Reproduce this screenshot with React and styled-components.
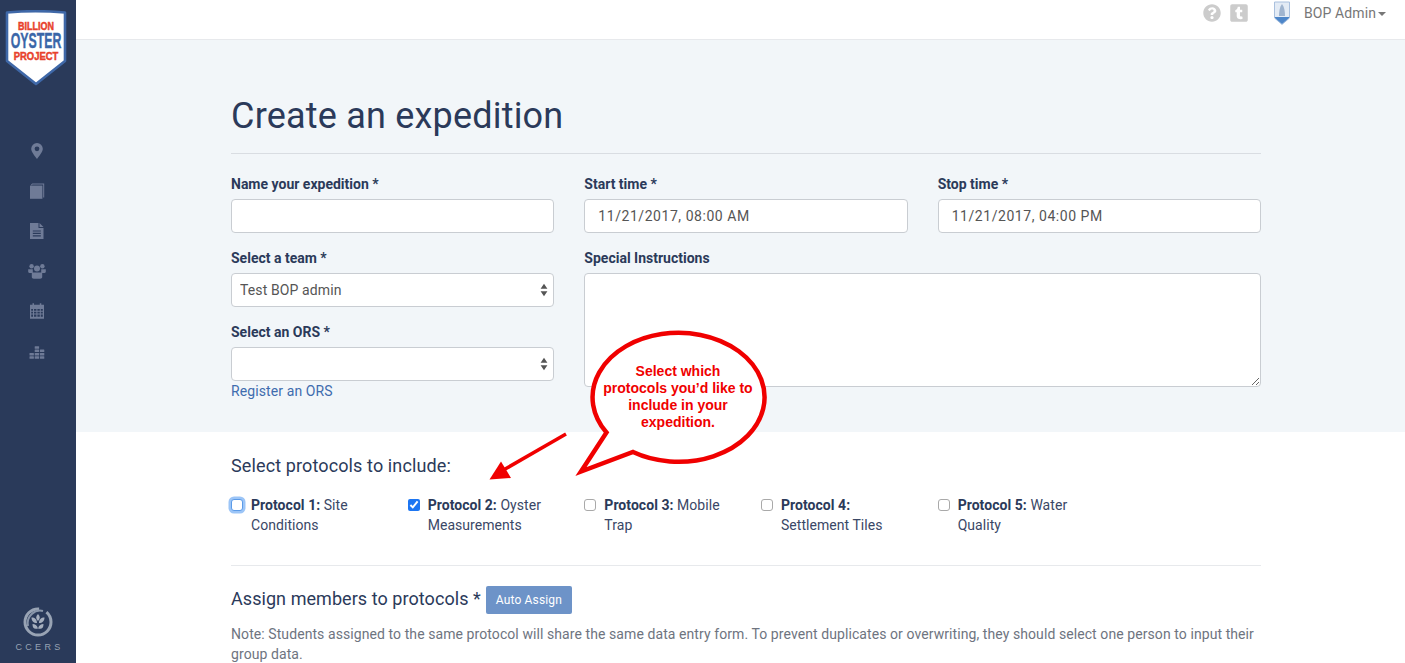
import React from "react";
import styled, { createGlobalStyle } from "styled-components";
import { FaQuestionCircle, FaTumblrSquare } from "react-icons/fa";

const Global = createGlobalStyle`
  html, body { margin: 0; padding: 0; height: 100%; overflow: hidden; background: #fff; }
  body { font-family: Roboto, "Liberation Sans", sans-serif; font-size: 14px; line-height: 20px; color: #2b3a5a; }
  * { box-sizing: border-box; }
`;

const Shell = styled.div`display: flex; height: 100vh; overflow: hidden; position: relative;`;
const Sidebar = styled.aside`
  width: 76px; flex: none; background: #2a3a5a; display: flex; flex-direction: column; align-items: center;
  padding-top: 10px;
`;
const LogoBox = styled.div`height: 121px; width: 100%; padding-left: 5px;`;
const Nav = styled.nav`display: flex; flex-direction: column; width: 100%;`;
const NavItem = styled.a`height: 40px; display: flex; align-items: center; justify-content: center; padding-right: 2px; color: #6f7b97;`;
const FooterLogo = styled.div`margin-top: auto; padding-bottom: 10px; display: flex; flex-direction: column; align-items: center; gap: 3px; color: #98a3b4;`;
const FooterText = styled.span`font-size: 9px; line-height: 12px; letter-spacing: 3.3px; padding-left: 3px; font-family: "Liberation Sans", sans-serif;`;

const Main = styled.main`flex: 1; min-width: 0; display: flex; flex-direction: column;`;
const TopBar = styled.header`
  height: 40px; flex: none; border-bottom: 1px solid #e7e9ec; background: #fff; display: flex; align-items: center;
  justify-content: flex-end; padding-right: 19px; padding-bottom: 13px; color: #cccccc;
`;
const TopIcon = styled.span`display: flex; margin-left: ${p => p.$gap}px; font-size: ${p => p.$size}px;`;
const UserName = styled.span`margin-left: 14px; color: #777; font-size: 14px; letter-spacing: .1px;`;
const Caret = styled.span`display: inline-block; margin-left: 2px; vertical-align: 2px; border-top: 4px solid #777; border-left: 4px solid transparent; border-right: 4px solid transparent;`;

const Panel = styled.section`flex: none; background: #f2f6f9; height: 392px; padding-left: 155px;`;
const Wrap = styled.div`width: 1030px;`;
const White = styled.section`flex: none; padding-left: 155px;`;
const Title = styled.h1`
  margin: 0; padding: 56px 0 17px; font-size: 36px; line-height: 40px; font-weight: 400; letter-spacing: .2px;
  border-bottom: 1px solid #d9dde2; height: 114px; color: #2b3a5a;
`;
const FormGrid = styled.div`display: grid; grid-template-columns: repeat(3, 1fr); column-gap: 30px; padding-top: 20px;`;
const Field = styled.div`display: flex; flex-direction: column; margin-bottom: 15px; grid-column: span ${p => p.$span || 1};`;
const Stack = styled.div`display: flex; flex-direction: column;`;
const Label = styled.label`font-weight: 700; font-size: 14px; line-height: 20px; margin-bottom: 5px; color: #2b3a5a;`;
const TextInput = styled.input`
  height: 34px; width: 100%; border: 1px solid #c9cdd2; border-radius: 4px; background: #fff; padding: 0 13px;
  font: 400 14px Roboto, sans-serif; letter-spacing: .55px; color: #555; outline: none;
`;
const SelectWrap = styled.div`position: relative; height: 34px;`;
const Select = styled.select`
  appearance: none; height: 34px; width: 100%; border: 1px solid #c9cdd2; border-radius: 4px; background: #fff; padding: 0 8px;
  font: 400 14px Roboto, sans-serif; letter-spacing: .12px; color: #555; outline: none;
`;
const Arrows = styled.svg`position: absolute; right: 3px; top: 10px; pointer-events: none;`;
const TextArea = styled.textarea`
  height: 114px; width: 100%; border: 1px solid #c9cdd2; border-radius: 4px; background: #fff; outline: none; display: block;
`;
const Link = styled.a`color: #3f6cae; font-size: 14px; line-height: 20px; letter-spacing: .1px;`;

const SectionHead = styled.h2`margin: 0; padding-top: 24px; font-size: 18px; line-height: 20px; font-weight: 400; letter-spacing: .12px; color: #2b3a5a;`;
const Protocols = styled.div`display: flex; width: 1060px; margin-top: 19px; padding-bottom: 30px; `;
const Protocol = styled.label`width: 176.66px; padding-right: 30px; display: flex; gap: 8px; line-height: 20px; letter-spacing: .05px; color: #3a4766;`;
const Check = styled.input`
  width: 12px; height: 12px; margin: 4px 0 0; flex: none; accent-color: #1d76f2; appearance: none;
  border: 1px solid #a9a9a9; border-radius: 3px; background: #fff;
  &:checked { appearance: auto; }
  ${p => p.$focus && "outline: none; border-color: #5b9be8; box-shadow: 0 0 0 2.5px #9cc5f7;"}
`;
const Strong = styled.b`font-weight: 700; color: #2b3a5a;`;
const Rule = styled.hr`margin: 0; border: 0; border-top: 1px solid #e7e9ec;`;
const AssignRow = styled.div`display: flex; align-items: flex-start; gap: 5px; margin-top: 20px;`;
const AssignTitle = styled.span`font-size: 18px; line-height: 26px; letter-spacing: .06px;`;
const Button = styled.button`
  height: 28px; width: 86px; border: 0; border-radius: 2px; background: #6d93c8; color: #fff;
  font: 400 12px Roboto, sans-serif; letter-spacing: .15px;
`;
const Note = styled.p`margin: 10px 0 0; color: #6e7480; font-size: 14px; line-height: 20px; letter-spacing: .08px;`;

const Callout = styled.div`position: absolute; left: 480px; top: 320px; width: 300px; height: 170px; pointer-events: none;`;
const CalloutText = styled.div`
  position: absolute; left: 118px; top: 43px; width: 160px; text-align: center;
  font: 700 14px/17px "Liberation Sans", Arial, sans-serif; color: #f00000;
`;

const Logo = () => (
  <svg width="62" height="78" viewBox="0 0 62 78">
    <path d="M2 2.5 C18 1 43 1 60 2.5 V51 L31 74 L2 51 Z" fill="#fff" stroke="#3f68a8" strokeWidth="2.6" strokeLinejoin="round" />
    <g fontFamily="Liberation Sans" fontWeight="700" textAnchor="middle">
      <text transform="translate(31 20) scale(.78 1)" fontSize="11.5" fill="#e8412b" stroke="#e8412b" strokeWidth=".5">BILLION</text>
      <text transform="translate(31 38) scale(.56 1)" fontSize="22" fill="#3a66a8" stroke="#3a66a8" strokeWidth=".4">OYSTER</text>
      <text transform="translate(31 49.5) scale(.82 1)" fontSize="11.5" fill="#e8412b" stroke="#e8412b" strokeWidth=".5">PROJECT</text>
    </g>
  </svg>
);

const Ic = ({ children }) => <svg width="18" height="18" viewBox="0 0 18 18" fill="currentColor">{children}</svg>;
const Marker = () => <Ic><path fillRule="evenodd" d="M9 1a5.8 5.8 0 0 1 5.8 5.8c0 3-3.5 7.2-5.8 10.2-2.3-3-5.8-7.2-5.8-10.2A5.8 5.8 0 0 1 9 1Zm0 3.4a2.4 2.4 0 1 0 0 4.8 2.4 2.4 0 0 0 0-4.8Z" /></Ic>;
const Book = () => <Ic><path d="M3 3.2 C3 2.2 4 1.6 5 1.6H16.2V15.5H15.2V2.6H5C4.2 2.6 3.6 3 3.4 3.4Z" /><path d="M2 3.6H14.4V16.8H2Z" /></Ic>;
const FileI = () => <Ic><path fillRule="evenodd" d="M2 1H10.5V6H15.5V17H2ZM4.8 8.4V9.6H12.8V8.4ZM4.8 10.8V12H12.8V10.8ZM4.8 13.2V14.4H12.8V13.2Z" /><path d="M11.5 1L15.5 5H11.5Z" /></Ic>;
const Users = () => <Ic><circle cx="3.6" cy="4.2" r="2.2" /><circle cx="14.4" cy="4.2" r="2.2" /><circle cx="9" cy="6.6" r="3" /><path d="M.2 7.2h4.6v3.8H1.4c-.7 0-1.2-.5-1.2-1.2ZM13.2 7.2h4.6v2.6c0 .7-.5 1.2-1.2 1.2h-3.4ZM3.8 10.5h10.4v4.6c0 1-.8 1.7-2 1.7H5.8c-1.2 0-2-.7-2-1.7Z" /></Ic>;
const Calendar = () => <Ic><path fillRule="evenodd" d="M2 2.8H4.5V1.2H6V2.8H11.8V1.2H13.3V2.8H16V16.8H2ZM3.2 7V8.7H5V7ZM6 7V8.7H8.4V7ZM9.4 7V8.7H11.8V7ZM12.8 7V8.7H14.8V7ZM3.2 9.7V11.4H5V9.7ZM6 9.7V11.4H8.4V9.7ZM9.4 9.7V11.4H11.8V9.7ZM12.8 9.7V11.4H14.8V9.7ZM3.2 12.4V14.8H5V12.4ZM6 12.4V14.8H8.4V12.4ZM9.4 12.4V14.8H11.8V12.4ZM12.8 12.4V14.8H14.8V12.4Z" /></Ic>;
const eqCells = [[1.5, 14.2], [1.5, 10.9], [6.7, 14.2], [6.7, 10.9], [6.7, 7.6], [6.7, 4.3], [11.9, 14.2], [11.9, 10.9], [11.9, 7.6]];
const Equalizer = () => <Ic>{eqCells.map(([x, y]) => (<rect key={x + "-" + y} x={x} y={y} width="4.4" height="2.5" rx=".5" />))}</Ic>;

const CcersMark = () => (
  <svg width="32" height="32" viewBox="0 0 32 32" fill="none">
    <circle cx="16" cy="16" r="13" stroke="#98a3b4" strokeWidth="3" strokeDasharray="62 8" />
    <path d="M6 20C4 10 13 3 21 5" stroke="#8996aa" strokeWidth="2" />
    <path d="M16 8c2.4 2.4 2.4 4.6 0 7-2.4-2.4-2.4-4.6 0-7ZM9.5 11.5c3.5 0 5.5 2 5.5 5.5-3.5 0-5.5-2-5.5-5.5ZM22.5 11.5c-3.5 0-5.5 2-5.5 5.5 3.5 0 5.5-2 5.5-5.5ZM10.5 18c2.5 0 4.5 1 5.5 4.5-3.5 1-5.5 0-5.5-4.5ZM21.5 18c-2.5 0-4.5 1-5.5 4.5 3.5 1 5.5 0 5.5-4.5Z" fill="#a6afbe" />
  </svg>
);

const UserBadge = () => (
  <svg width="16" height="24" viewBox="0 0 16 24">
    <path d="M.5 1H15.5V17L8 23.5L.5 17Z" fill="#e3ebf5" stroke="#a9c0de" strokeWidth="1" />
    <path d="M1 16H15V17L8 23L1 17Z" fill="#4d86c9" />
    <path d="M8 3C10.5 6 11 11 11 15H5C5 11 5.5 6 8 3Z" fill="#9fb4cf" />
  </svg>
);

const protocols = [
  ["Protocol 1:", "Site Conditions", true, false],
  ["Protocol 2:", "Oyster Measurements", false, true],
  ["Protocol 3:", "Mobile Trap", false, false],
  ["Protocol 4:", "Settlement Tiles", false, false],
  ["Protocol 5:", "Water Quality", false, false],
];

const UpDown = () => (
  <Arrows width="14" height="14" viewBox="0 0 14 14">
    <path d="M7 .8L10.4 5.8H3.6ZM7 13.2L3.6 8.2H10.4Z" fill="#555" />
  </Arrows>
);

export default function App() {
  return (
    <Shell>
      <Global />
      <Sidebar>
        <LogoBox><Logo /></LogoBox>
        <Nav>
          <NavItem><Marker /></NavItem>
          <NavItem><Book /></NavItem>
          <NavItem><FileI /></NavItem>
          <NavItem><Users /></NavItem>
          <NavItem><Calendar /></NavItem>
          <NavItem><Equalizer /></NavItem>
        </Nav>
        <FooterLogo>
          <CcersMark />
          <FooterText>CCERS</FooterText>
        </FooterLogo>
      </Sidebar>
      <Main>
        <TopBar>
          <TopIcon $gap={0} $size={18}><FaQuestionCircle /></TopIcon>
          <TopIcon $gap={8} $size={20}><FaTumblrSquare /></TopIcon>
          <TopIcon $gap={25} $size={16}><UserBadge /></TopIcon>
          <UserName>BOP Admin<Caret /></UserName>
        </TopBar>
        <Panel>
          <Wrap>
            <Title>Create an expedition</Title>
            <FormGrid>
              <Field>
                <Label>Name your expedition *</Label>
                <TextInput />
              </Field>
              <Field>
                <Label>Start time *</Label>
                <TextInput defaultValue="11/21/2017, 08:00 AM" />
              </Field>
              <Field>
                <Label>Stop time *</Label>
                <TextInput defaultValue="11/21/2017, 04:00 PM" />
              </Field>
              <Stack>
                <Field>
                  <Label>Select a team *</Label>
                  <SelectWrap>
                    <Select defaultValue="t"><option value="t">Test BOP admin</option></Select>
                    <UpDown />
                  </SelectWrap>
                </Field>
                <Stack>
                  <Label>Select an ORS *</Label>
                  <SelectWrap>
                    <Select defaultValue=""><option value=""></option></Select>
                    <UpDown />
                  </SelectWrap>
                  <Link>Register an ORS</Link>
                </Stack>
              </Stack>
              <Field $span={2}>
                <Label>Special Instructions</Label>
                <TextArea />
              </Field>
            </FormGrid>
          </Wrap>
        </Panel>
        <White>
          <Wrap>
            <SectionHead>Select protocols to include:</SectionHead>
            <Protocols>
              {protocols.map(([name, rest, focus, checked]) => (
                <Protocol key={name}>
                  <Check type="checkbox" $focus={focus} defaultChecked={checked} />
                  <span><Strong>{name}</Strong> {rest}</span>
                </Protocol>
              ))}
            </Protocols>
            <Rule />
            <AssignRow>
              <AssignTitle>Assign members to protocols *</AssignTitle>
              <Button>Auto Assign</Button>
            </AssignRow>
            <Note>Note: Students assigned to the same protocol will share the same data entry form. To prevent duplicates or overwriting, they should select one person to input their group data.</Note>
          </Wrap>
        </White>
      </Main>
      <Callout>
        <svg width="300" height="170" viewBox="0 0 300 170" fill="none">
          <path d="M126.5 112.5 A86 64.5 0 1 1 153 132 L 101 151.5 Z" fill="#fff" stroke="#f00000" strokeWidth="4.5" strokeMiterlimit="10" />
          <path d="M86 114L20 152" stroke="#f00000" strokeWidth="3.5" />
          <path d="M9.5 159.5L21 141.5L31 158Z" fill="#f00000" />
        </svg>
        <CalloutText>Select which<br />protocols you’d like to<br />include in your<br />expedition.</CalloutText>
      </Callout>
    </Shell>
  );
}
